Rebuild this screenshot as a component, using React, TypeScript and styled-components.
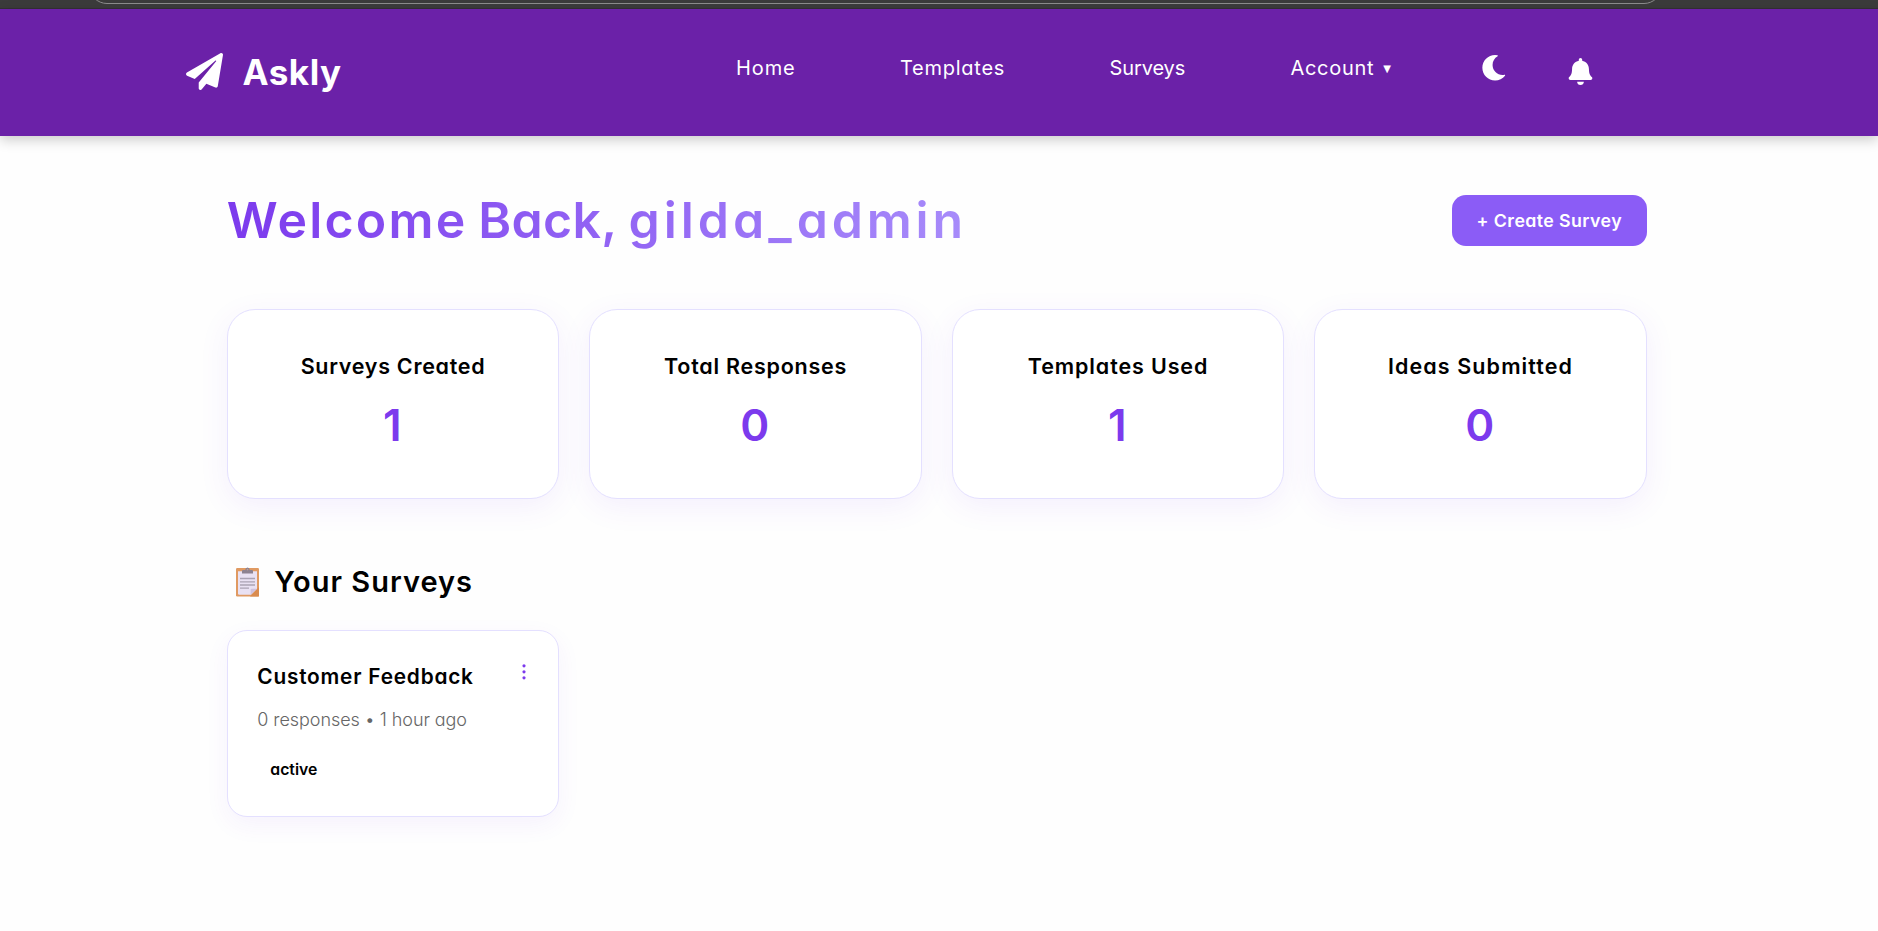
import React from 'react';
import styled, { createGlobalStyle } from 'styled-components';
import { FaBell, FaMoon, FaPaperPlane } from 'react-icons/fa';

const GlobalStyle = createGlobalStyle`
  * { box-sizing: border-box; }
  body {
    margin: 0;
    min-height: 100vh;
    background: #fefefe;
    color: #000;
    font-family: Inter, 'Liberation Sans', sans-serif;
    font-feature-settings: 'cv11';
  }
  h1, h2, h3, p { margin: 0; }
`;

const BrowserEdge = styled.div`
  height: 9px;
  overflow: hidden;
  background: #3b3b3b;
  border-bottom: 1px solid #343036;
`;

const AddressField = styled.div`
  height: 40px;
  margin: -36px 216px 0 89px;
  border: 1px solid #8c8c8c;
  border-radius: 18px;
`;

const Header = styled.header`
  display: flex;
  align-items: flex-start;
  height: 127px;
  padding: 44px 0 0 186px;
  background: #6b21a8;
  color: #fff;
  box-shadow: 0 4px 12px rgba(0, 0, 0, 0.2);
`;

const Logo = styled.a`
  display: flex;
  width: 550px;
  gap: 19.5px;
  font-size: 35px;
  font-weight: 700;
  line-height: 39px;
  letter-spacing: 0.5px;

  svg { font-size: 37px; }
`;

const Nav = styled.nav`
  display: flex;
  gap: 105px;
`;

const NavLink = styled.a<{ $width: number; $tracking: number }>`
  width: ${(p) => p.$width}px;
  font-size: 20px;
  line-height: 30px;
  letter-spacing: ${(p) => p.$tracking}px;
  white-space: nowrap;
`;

const Caret = styled.span`
  margin-left: 9px;
  font: 10px/1 'DejaVu Sans', sans-serif;
  vertical-align: 3px;
`;

const IconButtons = styled.div`
  display: flex;
  margin-left: 88px;
`;

const MoonIcon = styled(FaMoon)`
  margin-top: 2px;
  font-size: 25.5px;
`;

const BellIcon = styled(FaBell)`
  margin: 5px 0 0 60.5px;
  font-size: 27px;
`;

const Main = styled.main`
  width: 1420px;
  margin-left: 226.8px;
  padding-top: 54px;
`;

const WelcomeRow = styled.div`
  display: flex;
  align-items: center;
  justify-content: space-between;
  margin-bottom: 59px;
`;

const Welcome = styled.h1`
  width: 739px;
  font-size: 50px;
  font-weight: 600;
  line-height: 60px;
  white-space: nowrap;
  word-spacing: -4px;
  color: transparent;
  background: linear-gradient(90deg, #7c3aed, #a78bfa);
  background-clip: text;
  -webkit-background-clip: text;
`;

const Tracked = styled.span<{ $tracking: number }>`
  letter-spacing: ${(p) => p.$tracking}px;
`;

const Username = styled.span`
  margin-left: 3px;
`;

const CreateButton = styled.button`
  width: 195px;
  height: 51px;
  padding: 0;
  border: 0;
  border-radius: 14px;
  background: #8b5cf6;
  color: #fff;
  font: 600 17.8px Inter, sans-serif;
  font-feature-settings: 'cv11';
  letter-spacing: 0.4px;
`;

const StatGrid = styled.section`
  display: grid;
  grid-template-columns: repeat(4, 1fr);
  gap: 30px;
`;

const StatCard = styled.article`
  height: 190px;
  padding-top: 41px;
  border: 1px solid #e4e0ff;
  border-radius: 28px;
  background: #fff;
  text-align: center;
  box-shadow: 0 8px 30px rgba(124, 58, 237, 0.08);
`;

const StatTitle = styled.h3<{ $tracking: number }>`
  font-size: 21.5px;
  font-weight: 600;
  line-height: 30px;
  letter-spacing: ${(p) => p.$tracking}px;
`;

const StatValue = styled.p`
  margin: 19px 1.5px 0 0;
  font-size: 44px;
  font-weight: 600;
  line-height: 50px;
  color: #7c3aed;
`;

const SectionTitle = styled.h2`
  display: flex;
  align-items: center;
  gap: 14.5px;
  margin: 63px 0 28px;
  padding-left: 8px;
  font-size: 29px;
  font-weight: 600;
  line-height: 40px;
  letter-spacing: 1px;

  svg { margin-bottom: 1px; }
`;

const SurveyGrid = styled.section`
  display: grid;
  grid-template-columns: repeat(4, 1fr);
  gap: 30px;
`;

const SurveyCard = styled.article`
  height: 187px;
  padding: 31px 29px;
  border: 1px solid #e4e0ff;
  border-radius: 20px;
  background: #fff;
  box-shadow: 0 8px 24px rgba(124, 58, 237, 0.06);
`;

const SurveyHead = styled.div`
  display: flex;
  justify-content: space-between;

  svg { margin: 2px 3px 0 0; }
`;

const SurveyTitle = styled.h3`
  padding-left: 0.5px;
  font-size: 20.8px;
  font-weight: 600;
  line-height: 30px;
  letter-spacing: 0.8px;
`;

const SurveyMeta = styled.p`
  margin-top: 15px;
  padding-left: 0.5px;
  font-size: 18px;
  font-weight: 300;
  line-height: 26px;
  letter-spacing: -0.07px;
  color: #666;
`;

const Status = styled.span`
  display: inline-block;
  margin-top: 25px;
  padding-left: 13.5px;
  font-size: 15.8px;
  font-weight: 600;
  line-height: 24px;
`;

const stats = [
  { title: 'Surveys Created', value: 1, tracking: 0.72 },
  { title: 'Total Responses', value: 0, tracking: 0.75 },
  { title: 'Templates Used', value: 1, tracking: 0.88 },
  { title: 'Ideas Submitted', value: 0, tracking: 1.1 },
];

const ClipboardIcon = () => (
  <svg width="25" height="30" viewBox="0 0 25 30" fill="none">
    <rect x="1" y="1" width="23" height="28.5" rx="1.2" fill="#e09a62" />
    <path d="M24 20v9.5h-9z" fill="#d98b4f" />
    <path d="M3 4.2h19v17.6l-6 6H4.2Q3 27.8 3 26.6z" fill="#e9e1f3" />
    <path d="M15.6 27.8V23q0-1.2 1.2-1.2H22z" fill="#cfc1de" />
    <path d="M7 6.6V4q0-1 1-1h2.2q.3-2.6 2.3-2.6T14.8 3H17q1 0 1 1v2.6z" fill="#8d8291" />
    <circle cx="12.5" cy="2.6" r="0.8" fill="#c9a28d" />
    <path d="M5 11.5h15M5 14.8h15M5 18h15M5 21.2h9" stroke="#aaa2b4" strokeWidth="1.3" />
  </svg>
);

const MoreIcon = () => (
  <svg width="4" height="18" viewBox="0 0 4 18" fill="#7c3aed">
    <circle cx="2" cy="1.8" r="1.6" />
    <circle cx="2" cy="7.8" r="1.6" />
    <circle cx="2" cy="13.8" r="1.6" />
  </svg>
);

export default function App() {
  return (
    <>
      <GlobalStyle />
      <BrowserEdge>
        <AddressField />
      </BrowserEdge>
      <Header>
        <Logo>
          <FaPaperPlane />
          Askly
        </Logo>
        <Nav>
          <NavLink $width={59} $tracking={0.9}>Home</NavLink>
          <NavLink $width={104.5} $tracking={0.75}>Templates</NavLink>
          <NavLink $width={76} $tracking={-0.1}>Surveys</NavLink>
          <NavLink $width={102} $tracking={0.7}>
            Account<Caret>▼</Caret>
          </NavLink>
        </Nav>
        <IconButtons>
          <MoonIcon />
          <BellIcon />
        </IconButtons>
      </Header>
      <Main>
        <WelcomeRow>
          <Welcome>
            <Tracked $tracking={2.2}>Welcome </Tracked>
            <Tracked $tracking={0.3}>Back, </Tracked>
            <Username>
              <Tracked $tracking={4}>gilda</Tracked>
              <Tracked $tracking={5}>_</Tracked>
              <Tracked $tracking={3.8}>admin</Tracked>
            </Username>
          </Welcome>
          <CreateButton>+ Create Survey</CreateButton>
        </WelcomeRow>
        <StatGrid>
          {stats.map((s) => (
            <StatCard key={s.title}>
              <StatTitle $tracking={s.tracking}>{s.title}</StatTitle>
              <StatValue>{s.value}</StatValue>
            </StatCard>
          ))}
        </StatGrid>
        <SectionTitle>
          <ClipboardIcon />
          Your Surveys
        </SectionTitle>
        <SurveyGrid>
          <SurveyCard>
            <SurveyHead>
              <SurveyTitle>Customer Feedback</SurveyTitle>
              <MoreIcon />
            </SurveyHead>
            <SurveyMeta>0 responses • 1 hour ago</SurveyMeta>
            <Status>active</Status>
          </SurveyCard>
        </SurveyGrid>
      </Main>
    </>
  );
}
